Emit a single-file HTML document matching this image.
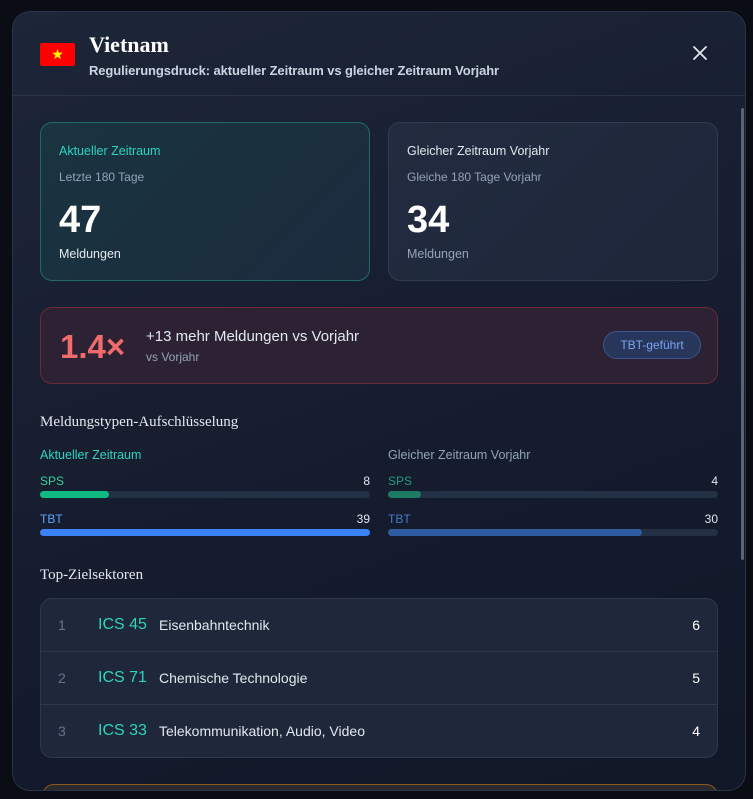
<!DOCTYPE html>
<html><head><meta charset="utf-8"><style>
*{box-sizing:border-box;margin:0;padding:0}
body{width:753px;height:799px;background:#0a0d14;font-family:"Liberation Sans",sans-serif;position:relative;overflow:hidden;color:#e2e8f0}
.modal{position:absolute;left:12px;top:11px;width:734px;height:780px;border-radius:18px;background:linear-gradient(160deg,#1d2538,#131a2c 70%,#111827);border:1px solid #2a3447;overflow:hidden}
.hdr{position:absolute;left:0;top:0;width:100%;height:84px;border-bottom:1px solid #2a3447}
.flag{position:absolute;left:27px;top:31px;width:35px;height:23px;background:#f00;border-radius:2px;color:#ff0;font-size:14px;line-height:23px;text-align:center}
h1{position:absolute;left:76px;top:20px;font-family:"Liberation Serif",serif;font-size:22px;font-weight:bold;color:#fff}
.sub{position:absolute;left:76px;top:51px;font-size:13px;font-weight:bold;color:#cbd5e1;letter-spacing:-.1px}
.x{position:absolute;left:679px;top:33px;width:16px;height:16px}
.sb{position:absolute;left:728px;top:96px;width:3px;height:452px;background:#5b6475;border-radius:2px}
.card{position:absolute;top:110px;width:330px;height:159px;border-radius:12px;padding:0 18px}
.c1{left:27px;background:linear-gradient(135deg,#1a3440,#1b2b3d);border:1px solid #1f6b62}
.c2{left:375px;background:linear-gradient(135deg,#222b3f,#1e273a);border:1px solid #323c50}
.card .t{position:absolute;left:18px;top:21px;font-size:12.5px}
.card .s{position:absolute;left:18px;top:47px;font-size:12px;color:#94a3b8}
.card .n{position:absolute;left:18px;top:76px;font-size:38px;font-weight:bold;color:#fff}
.card .m{position:absolute;left:18px;top:124px;font-size:12.5px}
.ratio{position:absolute;left:27px;top:295px;width:678px;height:77px;border-radius:12px;background:#2c2233;border:1px solid #6a2a37}
.big{position:absolute;left:19px;top:20px;font-size:33px;font-weight:bold;color:#f26b6b}
.rt{position:absolute;left:105px;top:20px;font-size:15px;color:#e2e8f0}
.rs{position:absolute;left:105px;top:42px;font-size:12px;color:#94a3b8}
.pill{position:absolute;left:562px;top:23px;width:98px;height:28px;border-radius:14px;background:#27365a;border:1px solid #3b5590;color:#7aa5f5;font-size:12px;text-align:center;line-height:26px}
h2{position:absolute;left:27px;font-family:"Liberation Serif",serif;font-size:15px;font-weight:normal;color:#e2e8f0}
.col{position:absolute;top:436px;width:330px}
.col .h{font-size:12.5px;height:28px}
.row{position:relative;height:38px}
.row .l{position:absolute;left:0;top:-2px;font-size:12px}
.row .v{position:absolute;right:0;top:-2px;font-size:12px;color:#e2e8f0}
.bar{position:absolute;left:0;top:15px;width:330px;height:7px;border-radius:4px;background:#243044}
.bar i{display:block;height:100%;border-radius:4px}
.list{position:absolute;left:27px;top:586px;width:678px;height:160px;border-radius:12px;background:#1f283a;border:1px solid #2e394c}
.li{position:relative;height:53px;border-bottom:1px solid #2e394c}
.li:last-child{border:none}
.li span{position:absolute;top:18px}
.li .a{left:17px;font-size:14px;color:#64748b}
.li .b{left:57px;font-size:16px;color:#2dd4bf;top:17px}
.li .c{left:118px;font-size:14px;color:#e2e8f0}
.li .d{right:17px;font-size:14px;color:#fff}
.orange{position:absolute;left:29px;top:772px;width:676px;height:40px;border-radius:12px;background:#2a2a2e;border:1px solid #8a5a1c}
</style></head><body>
<div class="modal">
<div class="hdr">
<div class="flag">★</div>
<h1>Vietnam</h1>
<div class="sub">Regulierungsdruck: aktueller Zeitraum vs gleicher Zeitraum Vorjahr</div>
<svg class="x" viewBox="0 0 16 16"><path d="M2 2L14 14M14 2L2 14" stroke="#e2e8f0" stroke-width="1.8" stroke-linecap="round"/></svg>
</div>
<div class="sb"></div>
<div class="card c1"><div class="t" style="color:#2dd4bf">Aktueller Zeitraum</div><div class="s">Letzte 180 Tage</div><div class="n">47</div><div class="m" style="color:#e2e8f0">Meldungen</div></div>
<div class="card c2"><div class="t" style="color:#e2e8f0">Gleicher Zeitraum Vorjahr</div><div class="s">Gleiche 180 Tage Vorjahr</div><div class="n">34</div><div class="m" style="color:#94a3b8">Meldungen</div></div>
<div class="ratio"><div class="big">1.4×</div><div class="rt">+13 mehr Meldungen vs Vorjahr</div><div class="rs">vs Vorjahr</div><div class="pill">TBT-geführt</div></div>
<h2 style="top:402px">Meldungstypen-Aufschlüsselung</h2>
<div class="col" style="left:27px"><div class="h" style="color:#2dd4bf">Aktueller Zeitraum</div>
<div class="row"><div class="l" style="color:#34d399">SPS</div><div class="v">8</div><div class="bar"><i style="width:21%;background:#10b981"></i></div></div>
<div class="row"><div class="l" style="color:#60a5fa">TBT</div><div class="v">39</div><div class="bar"><i style="width:100%;background:#3b82f6"></i></div></div></div>
<div class="col" style="left:375px"><div class="h" style="color:#94a3b8">Gleicher Zeitraum Vorjahr</div>
<div class="row"><div class="l" style="color:#1f9e7a">SPS</div><div class="v">4</div><div class="bar"><i style="width:10%;background:#1d7a63"></i></div></div>
<div class="row"><div class="l" style="color:#4a78c4">TBT</div><div class="v">30</div><div class="bar"><i style="width:77%;background:#2f5ba3"></i></div></div></div>
<h2 style="top:555px">Top-Zielsektoren</h2>
<div class="list">
<div class="li"><span class="a">1</span><span class="b">ICS 45</span><span class="c">Eisenbahntechnik</span><span class="d">6</span></div>
<div class="li"><span class="a">2</span><span class="b">ICS 71</span><span class="c">Chemische Technologie</span><span class="d">5</span></div>
<div class="li"><span class="a">3</span><span class="b">ICS 33</span><span class="c">Telekommunikation, Audio, Video</span><span class="d">4</span></div>
</div>
<div class="orange"></div>
</div>
</body></html>
